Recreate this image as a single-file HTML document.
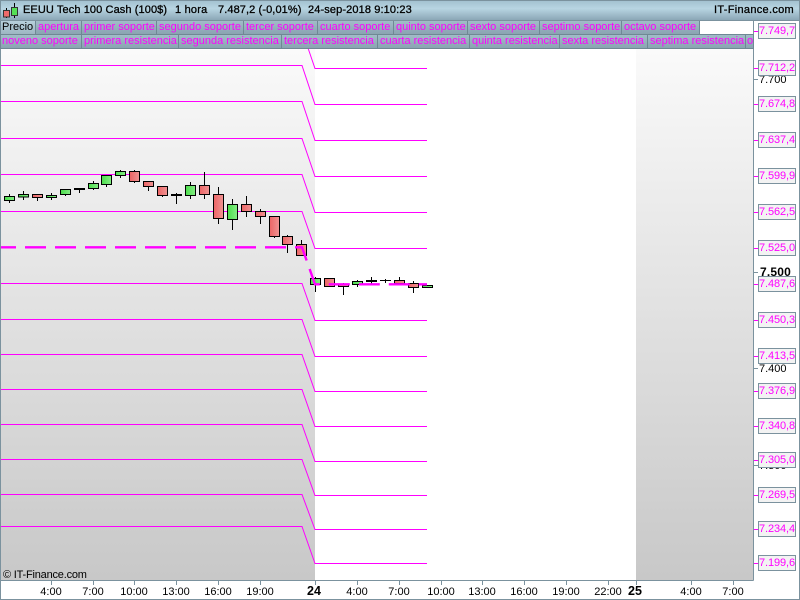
<!DOCTYPE html>
<html><head><meta charset="utf-8"><style>
html,body{margin:0;padding:0;background:#fff}
#p{position:relative;width:800px;height:600px;overflow:hidden;background:#fff;font-family:"Liberation Sans",sans-serif;font-size:11px;color:#000}
#p div{position:absolute;white-space:nowrap;box-sizing:border-box}
.h{top:0;height:21px;line-height:21px;font-size:11px;-webkit-text-stroke:.3px #000}
.t{height:14px;line-height:13px;background:linear-gradient(#a2bcc9,#8aa4b1);border:1px solid #6f8894;border-left:0;border-top:0;color:#f0f;padding-left:2px;overflow:hidden}
.r1{top:21px}.r2{top:35px}
.l{left:758px;width:38px;height:16px;border:1px solid #7b929e;background:#f3f3f3;color:#f0f;line-height:14px;text-align:center;letter-spacing:-.1px}
.x{top:586px;line-height:13px;width:40px;text-align:center}
.b{top:585px;font:bold 12.5px/13px "Liberation Sans",sans-serif}
.y{left:759px;line-height:13px}
</style></head><body><div id="p">
<div style="left:636px;top:48px;width:117px;height:532px;background:linear-gradient(#fafafa,#c8c8c8)"></div>
<div style="left:0;top:48px;width:315px;height:532px;background:linear-gradient(#fafafa,#c8c8c8)"></div>
<svg width="800" height="600" style="position:absolute;left:0;top:0" shape-rendering="auto">
<defs>
<linearGradient id="g"><stop offset="0" stop-color="#4bdc4b"/><stop offset="1" stop-color="#85ee85"/></linearGradient>
<linearGradient id="r"><stop offset="0" stop-color="#ec6464"/><stop offset="1" stop-color="#f09494"/></linearGradient>
</defs>
<g fill="none" stroke="#f0f" stroke-width="1">
<path d="M308 48L315 68.5H427"/>
<path d="M1 65.5H302L315 104.5H427"/>
<path d="M1 101.5H302L315 140.5H427"/>
<path d="M1 138.5H302L315 176.5H427"/>
<path d="M1 174.5H302L315 212.5H427"/>
<path d="M1 211.5H302L315 248.5H427"/>
<path d="M1 283.5H302L315 320.5H427"/>
<path d="M1 319.5H302L315 356.5H427"/>
<path d="M1 354.5H302L315 391.5H427"/>
<path d="M1 389.5H302L315 426.5H427"/>
<path d="M1 424.5H302L315 461.5H427"/>
<path d="M1 459.5H302L315 495.5H427"/>
<path d="M1 494.5H302L315 529.5H427"/>
<path d="M1 526.5H302L315 563.5H427"/>
</g>
<g stroke="#000" stroke-width="1" fill="none">
<path d="M9.5 194V203M23.5 191V200M37.5 194V201M51.5 193V200M65.5 189V196M79.5 188V193M93.5 181V190M106.5 175V187M120.5 170V178M134.5 170V183M148.5 181V191M162.5 186V197M176.5 193V204M190.5 182V199M204.5 172V199M218.5 187V224M232.5 199V230M246.5 196V217M260.5 209V224M274.5 216V238M287.5 235V253M301.5 240V256M315.5 277V292M329.5 278V287M343.5 283V295M357.5 280V287M371.5 277V284M385.5 279V283M399.5 277V285M413.5 281V293M427.5 285V288"/>
</g>
<g stroke="#000" stroke-width="1">
<rect x="4.5" y="196.5" width="10" height="4" fill="url(#g)"/>
<rect x="18.5" y="194.5" width="10" height="2.5" fill="url(#g)"/>
<rect x="32.5" y="194.5" width="10" height="3" fill="url(#r)"/>
<rect x="46.5" y="195.5" width="10" height="2" fill="url(#g)"/>
<rect x="60.5" y="189.5" width="10" height="5" fill="url(#g)"/>
<rect x="74.5" y="188.5" width="10" height="1" fill="#000"/>
<rect x="88.5" y="183.5" width="10" height="5" fill="url(#g)"/>
<rect x="101.5" y="175.5" width="10" height="9" fill="url(#g)"/>
<rect x="115.5" y="171.5" width="10" height="4" fill="url(#g)"/>
<rect x="129.5" y="171.5" width="10" height="10" fill="url(#r)"/>
<rect x="143.5" y="181.5" width="10" height="5" fill="url(#r)"/>
<rect x="157.5" y="186.5" width="10" height="9" fill="url(#r)"/>
<rect x="171.5" y="194.5" width="10" height="1" fill="#000"/>
<rect x="185.5" y="185.5" width="10" height="10" fill="url(#g)"/>
<rect x="199.5" y="185.5" width="10" height="9" fill="url(#r)"/>
<rect x="213.5" y="194.5" width="10" height="24" fill="url(#r)"/>
<rect x="227.5" y="204.5" width="10" height="15" fill="url(#g)"/>
<rect x="241.5" y="204.5" width="10" height="7" fill="url(#r)"/>
<rect x="255.5" y="211.5" width="10" height="5" fill="url(#r)"/>
<rect x="269.5" y="216.5" width="10" height="20" fill="url(#r)"/>
<rect x="282.5" y="236.5" width="10" height="8" fill="url(#r)"/>
<rect x="296.5" y="244.5" width="10" height="11" fill="url(#r)"/>
<rect x="310.5" y="278.5" width="10" height="6" fill="url(#g)"/>
<rect x="324.5" y="278.5" width="10" height="8" fill="url(#r)"/>
<rect x="338.5" y="284.5" width="10" height="2" fill="url(#r)"/>
<rect x="352.5" y="281.5" width="10" height="3" fill="url(#g)"/>
<rect x="366.5" y="280.5" width="10" height="1" fill="#000"/>
<path d="M380 280.5H391"/>
<rect x="394.5" y="280.5" width="10" height="3" fill="url(#r)"/>
<rect x="408.5" y="283.5" width="10" height="4" fill="url(#r)"/>
<rect x="422.5" y="285.5" width="10" height="2" fill="url(#g)"/>
</g>
<path d="M1 247.3H302L315 284.3H427" fill="none" stroke="#f0f" stroke-width="2.4" stroke-dasharray="21 9" stroke-dashoffset="6"/>
<g stroke="#f0f" stroke-width="1">
<path d="M753 31.5h5M753 68.5h5M753 104.5h5M753 140.5h5M753 176.5h5M753 212.5h5M753 248.5h5M753 284.5h5M753 320.5h5M753 356.5h5M753 391.5h5M753 426.5h5M753 460.5h5M753 495.5h5M753 529.5h5M753 563.5h5"/>
</g>
<g stroke="#7b929e" stroke-width="1" fill="none">
<path d="M753 79.5h5M753 272.5h5M753 368.5h5M753 465.5h5"/>
<path d="M51.5 581v4M93.5 581v4M134.5 581v4M176.5 581v4M218.5 581v4M260.5 581v4M315.5 581v4M357.5 581v4M399.5 581v4M441.5 581v4M482.5 581v4M524.5 581v4M566.5 581v4M608.5 581v4M636.5 581v4M691.5 581v4M733.5 581v4"/>
<path d="M753.5 21V580.5M0 580.5H753.5M0 599.5H800M799.5 0V600"/>
</g>
<rect x="0" y="0" width="1" height="600" fill="#7b929e"/>
</svg>
<div class="y" style="top:74px">7.700</div>
<div class="y" style="top:363px">7.400</div>
<div class="y" style="top:460px">7.300</div>
<div class="y" style="top:266px;font-weight:bold;font-size:12px;left:760px;letter-spacing:.2px">7.500</div>
<div class="l" style="top:23px">7.749,7</div>
<div class="l" style="top:60px">7.712,2</div>
<div class="l" style="top:96px">7.674,8</div>
<div class="l" style="top:132px">7.637,4</div>
<div class="l" style="top:168px">7.599,9</div>
<div class="l" style="top:204px">7.562,5</div>
<div class="l" style="top:240px">7.525,0</div>
<div class="l" style="top:276px">7.487,6</div>
<div class="l" style="top:312px">7.450,3</div>
<div class="l" style="top:348px">7.413,5</div>
<div class="l" style="top:383px">7.376,9</div>
<div class="l" style="top:418px">7.340,8</div>
<div class="l" style="top:452px">7.305,0</div>
<div class="l" style="top:487px">7.269,5</div>
<div class="l" style="top:521px">7.234,4</div>
<div class="l" style="top:555px">7.199,6</div>

<div style="left:0;top:0;width:800px;height:21px;background:linear-gradient(#a4c2d1,#b8d5e2 40%,#8ba7b6);border:1px solid #7b929e"></div>
<svg width="20" height="20" style="position:absolute;left:2px;top:1px">
<path d="M4.5 7V17M12.5 2V17" stroke="#000"/>
<rect x="1.5" y="9.5" width="6" height="6.5" fill="#ee6a6a" stroke="#333"/>
<rect x="9.5" y="6.5" width="6" height="8" fill="#55e055" stroke="#333"/>
</svg>
<div class="h" style="left:23px;letter-spacing:.1px">EEUU Tech 100 Cash (100$)</div>
<div class="h" style="left:175px;letter-spacing:.2px">1 hora</div>
<div class="h" style="left:218px;letter-spacing:.1px">7.487,2 (-0,01%)</div>
<div class="h" style="left:308px;letter-spacing:.12px">24-sep-2018 9:10:23</div>
<div class="h" style="left:714px;letter-spacing:.3px">IT-Finance.com</div>

<div class="t r1" style="left:0;width:36px;background:linear-gradient(#b7d0db,#9db6c2);color:#000;border-left:1px solid #6f8894;padding-left:1px">Precio</div>
<div class="t r1" style="left:36px;width:46px">apertura</div>
<div class="t r1" style="left:82px;width:75px">primer soporte</div>
<div class="t r1" style="left:157px;width:87px">segundo soporte</div>
<div class="t r1" style="left:244px;width:74px">tercer soporte</div>
<div class="t r1" style="left:318px;width:76px">cuarto soporte</div>
<div class="t r1" style="left:394px;width:74px">quinto soporte</div>
<div class="t r1" style="left:468px;width:72px">sexto soporte</div>
<div class="t r1" style="left:540px;width:82px">septimo soporte</div>
<div class="t r1" style="left:622px;width:78px">octavo soporte</div>
<div style="left:700px;top:34px;width:54px;height:1px;background:#6f8894"></div>

<div class="t r2" style="left:0;width:82px;border-left:1px solid #6f8894;padding-left:1px">noveno soporte</div>
<div class="t r2" style="left:82px;width:97px">primera resistencia</div>
<div class="t r2" style="left:179px;width:103px">segunda resistencia</div>
<div class="t r2" style="left:282px;width:96px">tercera resistencia</div>
<div class="t r2" style="left:378px;width:92px">cuarta resistencia</div>
<div class="t r2" style="left:470px;width:90px">quinta resistencia</div>
<div class="t r2" style="left:560px;width:88px">sexta resistencia</div>
<div class="t r2" style="left:648px;width:98px">septima resistencia</div>
<div class="t r2" style="left:746px;width:8px;padding-left:1px">o</div>

<div style="left:3px;top:569px;line-height:13px;letter-spacing:-.2px">© IT-Finance.com</div>
<div class="x" style="left:31px">4:00</div>
<div class="x" style="left:73px">7:00</div>
<div class="x" style="left:114px">10:00</div>
<div class="x" style="left:156px">13:00</div>
<div class="x" style="left:198px">16:00</div>
<div class="x" style="left:240px">19:00</div>
<div class="x b" style="left:294px">24</div>
<div class="x" style="left:337px">4:00</div>
<div class="x" style="left:379px">7:00</div>
<div class="x" style="left:421px">10:00</div>
<div class="x" style="left:462px">13:00</div>
<div class="x" style="left:504px">16:00</div>
<div class="x" style="left:546px">19:00</div>
<div class="x" style="left:588px">22:00</div>
<div class="x b" style="left:615px">25</div>
<div class="x" style="left:671px">4:00</div>
<div class="x" style="left:713px">7:00</div>
</div></body></html>
